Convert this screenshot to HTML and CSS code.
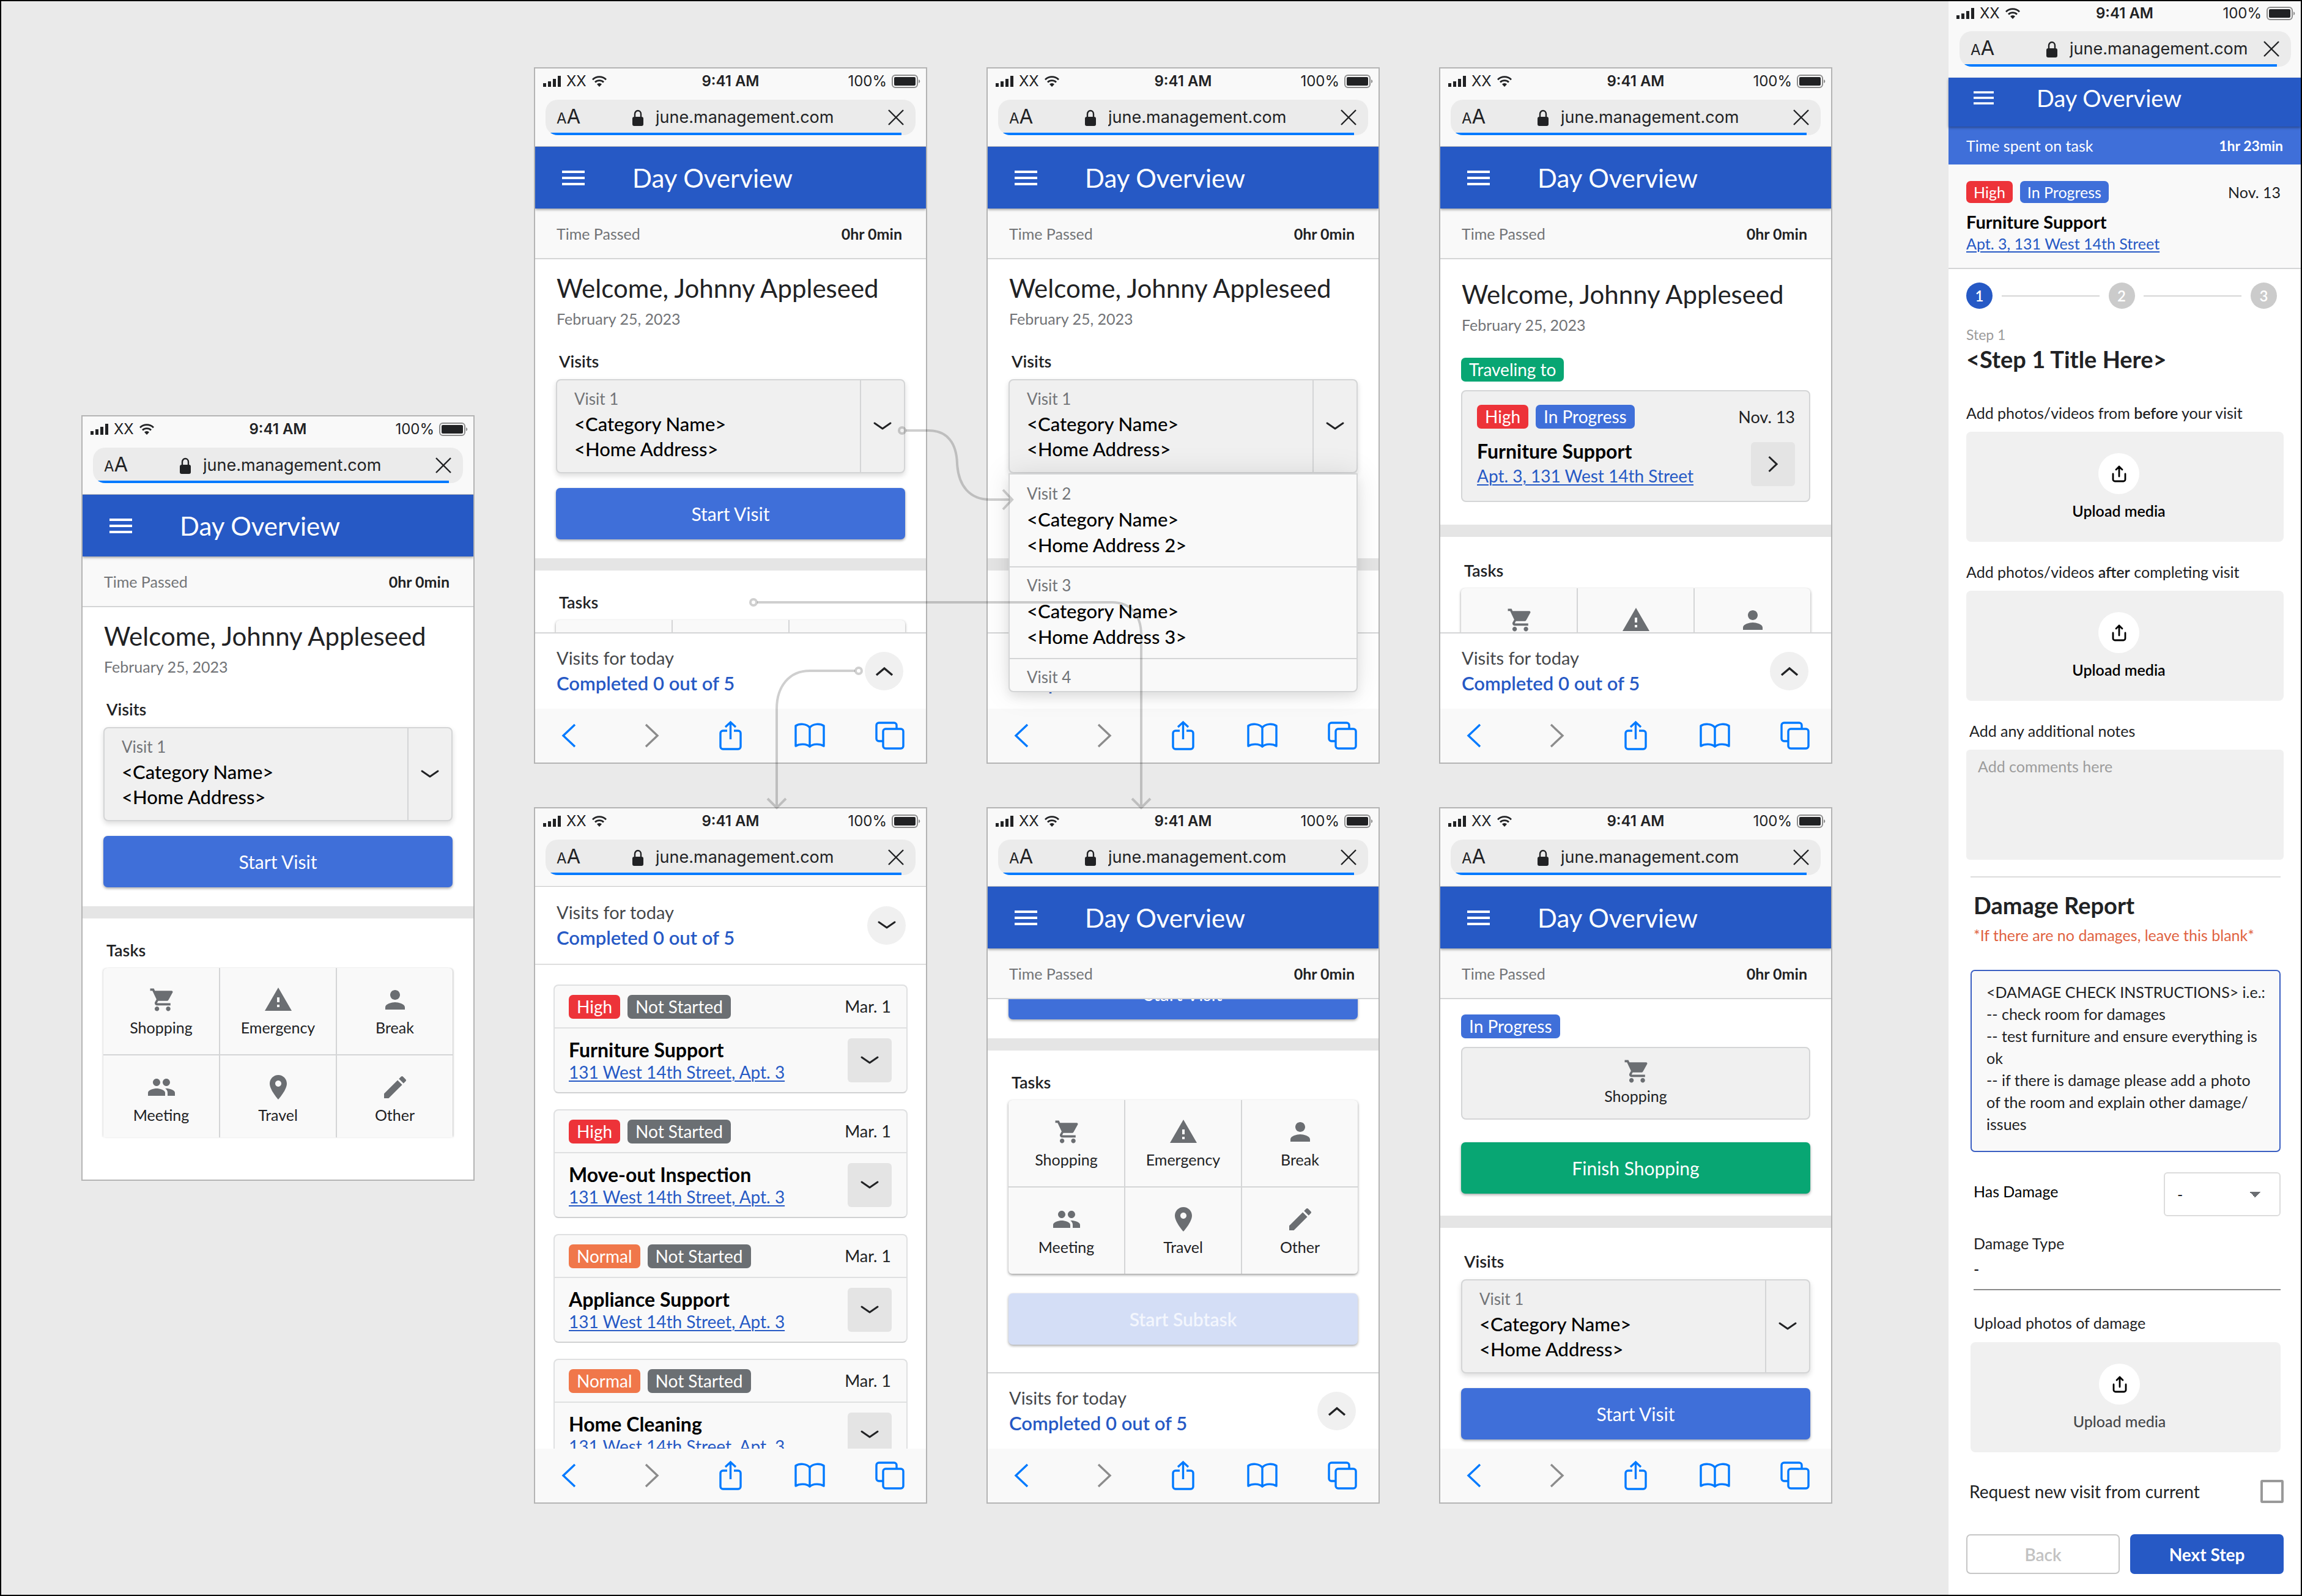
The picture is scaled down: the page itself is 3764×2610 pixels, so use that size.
FILE: index.html
```html
<!DOCTYPE html>
<html lang="en">
<head>
<meta charset="utf-8">
<meta name="viewport" content="width=device-width, initial-scale=1">
<title>June Management – Day Overview screens</title>
<link rel="stylesheet" href="styles.css">
</head>
<body>

<svg class="sprite" aria-hidden="true">
  <symbol id="i-signal" viewBox="0 0 29 18"><path d="M0 12h5v6H0zM8 9h5v9H8zM16 5h5v13h-5zM24 0h5v18h-5z"/></symbol>
  <symbol id="i-wifi" viewBox="0 0 24 18"><path d="M1 6.2A15.5 15.5 0 0 1 23 6.2M5 10.4A10 10 0 0 1 19 10.4" fill="none" stroke="currentColor" stroke-width="2.8"/><path d="M8 13.8A5.6 5.6 0 0 1 16 13.8L12 18z"/></symbol>
  <symbol id="i-battery" viewBox="0 0 47 22"><rect x="1" y="1" width="41" height="20" rx="5" fill="none" stroke="#8c8c8c" stroke-width="2"/><rect x="4" y="4" width="35" height="14" rx="2"/><path d="M44 8c3 1 3 5 0 6z" fill="#8c8c8c"/></symbol>
  <symbol id="i-lock" viewBox="0 0 18 27"><path d="M4 13V7.5a5 5.5 0 0 1 10 0V13" fill="none" stroke="currentColor" stroke-width="2.4"/><rect y="12" width="18" height="15" rx="3"/></symbol>
  <symbol id="i-close" viewBox="0 0 26 26"><path d="M1 1l24 24M25 1L1 25" fill="none" stroke="currentColor" stroke-width="2.4"/></symbol>
  <symbol id="i-menu" viewBox="0 0 37 24"><path d="M0 0h37v4H0zM0 10h37v4H0zM0 20h37v4H0z"/></symbol>
  <symbol id="i-down" viewBox="0 0 30 14"><path d="M2 2l13 9 13-9" fill="none" stroke="currentColor" stroke-width="3" stroke-linecap="round" stroke-linejoin="round"/></symbol>
  <symbol id="i-up" viewBox="0 0 30 16"><path d="M2 14L15 3l13 11" fill="none" stroke="currentColor" stroke-width="3.4"/></symbol>
  <symbol id="i-right" viewBox="0 0 16 28"><path d="M1.5 2L14 14 1.5 26" fill="none" stroke="currentColor" stroke-width="3"/></symbol>
  <symbol id="i-cart" viewBox="-2 -1 26 26"><path d="M7 18c-1.1 0-1.99.9-1.99 2S5.9 22 7 22s2-.9 2-2-.9-2-2-2zM1 2v2h2l3.6 7.59-1.35 2.45c-.16.28-.25.61-.25.96 0 1.1.9 2 2 2h12v-2H7.42c-.14 0-.25-.11-.25-.25l.03-.12.9-1.63h7.45c.75 0 1.41-.41 1.75-1.03l3.58-6.49A1 1 0 0 0 20 4H5.21l-.94-2H1zm16 16c-1.1 0-1.99.9-1.99 2s.89 2 1.99 2 2-.9 2-2-.9-2-2-2z"/></symbol>
  <symbol id="i-warning" viewBox="0 0 24 24"><path d="M1 21h22L12 2 1 21zm12-3h-2v-2h2v2zm0-4h-2v-4h2v4z"/></symbol>
  <symbol id="i-person" viewBox="0 0 24 24"><path d="M12 12c2.21 0 4-1.79 4-4s-1.79-4-4-4-4 1.79-4 4 1.79 4 4 4zm0 2c-2.67 0-8 1.34-8 4v2h16v-2c0-2.66-5.33-4-8-4z"/></symbol>
  <symbol id="i-group" viewBox="0 0 24 24"><path d="M16 11c1.66 0 2.99-1.34 2.99-3S17.66 5 16 5c-1.66 0-3 1.34-3 3s1.34 3 3 3zm-8 0c1.66 0 2.99-1.34 2.99-3S9.66 5 8 5C6.34 5 5 6.34 5 8s1.34 3 3 3zm0 2c-2.33 0-7 1.17-7 3.5V19h14v-2.5c0-2.33-4.67-3.5-7-3.5zm8 0c-.29 0-.62.02-.97.05 1.16.84 1.97 1.97 1.97 3.45V19h6v-2.5c0-2.33-4.67-3.5-7-3.5z"/></symbol>
  <symbol id="i-place" viewBox="0 0 24 24"><path d="M12 2C8.13 2 5 5.13 5 9c0 5.25 7 13 7 13s7-7.75 7-13c0-3.87-3.13-7-7-7zm0 9.5c-1.38 0-2.5-1.12-2.5-2.5s1.12-2.5 2.5-2.5 2.5 1.12 2.5 2.5-1.12 2.5-2.5 2.5z"/></symbol>
  <symbol id="i-edit" viewBox="0 0 24 24"><path d="M3 17.25V21h3.75L17.81 9.94l-3.75-3.75L3 17.25zM20.71 7.04c.39-.39.39-1.02 0-1.41l-2.34-2.34c-.39-.39-1.02-.39-1.41 0l-1.83 1.83 3.75 3.75 1.83-1.83z"/></symbol>
  <symbol id="i-upload" viewBox="0 0 24 28"><path d="M2 14v9a3 3 0 0 0 3 3h14a3 3 0 0 0 3-3v-9M12 18V2M7 7l5-5 5 5" fill="none" stroke="currentColor" stroke-width="2.8" stroke-linecap="round" stroke-linejoin="round"/></symbol>
  <symbol id="i-back" viewBox="0 0 50 50"><path d="M35 7L16 25l19 18" fill="none" stroke="currentColor" stroke-width="3.4"/></symbol>
  <symbol id="i-forward" viewBox="0 0 50 50"><path d="M20 7l19 18-19 18" fill="none" stroke="currentColor" stroke-width="3.4"/></symbol>
  <symbol id="i-share" viewBox="0 0 50 50"><path d="M21 17h-7a4 4 0 0 0-4 4v22a4 4 0 0 0 4 4h25a4 4 0 0 0 4-4V21a4 4 0 0 0-4-4h-7M26.500 31V3M18 11l8.500-8 8.500 8" fill="none" stroke="currentColor" stroke-width="3.4"/></symbol>
  <symbol id="i-book" viewBox="0 0 50 50"><path d="M25 12C20 5 8 5 2 9v33c6-4 18-4 23 1 5-5 17-5 23-1V9C42 5 30 5 25 12zV43" fill="none" stroke="currentColor" stroke-width="3.4" stroke-linejoin="round"/></symbol>
  <symbol id="i-tabs" viewBox="0 0 50 50"><path d="M14 34H7a4 4 0 0 1-4-4V8a4 4 0 0 1 4-4h25a4 4 0 0 1 4 4v5M18 14h25a4 4 0 0 1 4 4v24a4 4 0 0 1-4 4H18a4 4 0 0 1-4-4V18a4 4 0 0 1 4-4z" fill="none" stroke="currentColor" stroke-width="3.4"/></symbol>
</svg>

<template id="browser-chrome">
  <div class="status">
    <span class="status-left"><svg class="signal"><use href="#i-signal"/></svg><span>XX</span><svg class="wifi"><use href="#i-wifi"/></svg></span>
    <span class="status-time">9:41 AM</span>
    <span class="status-right">100%<svg class="battery"><use href="#i-battery"/></svg></span>
  </div>
  <div class="address">
    <button type="button" class="text-size" aria-label="Text size"><span class="small-a">A</span>A</button>
    <svg class="lock"><use href="#i-lock"/></svg>
    <input class="url" type="text" value="june.management.com" aria-label="Address" readonly>
    <button type="button" class="stop" aria-label="Stop loading"><svg><use href="#i-close"/></svg></button>
    <span class="progress"></span>
  </div>
</template>

<template id="app-bar">
  <button type="button" class="menu-button" aria-label="Menu"><svg><use href="#i-menu"/></svg></button>
  <h1 class="app-title">Day Overview</h1>
</template>

<template id="browser-toolbar">
  <button type="button" aria-label="Back"><svg><use href="#i-back"/></svg></button>
  <button type="button" class="is-off" aria-label="Forward"><svg><use href="#i-forward"/></svg></button>
  <button type="button" aria-label="Share"><svg><use href="#i-share"/></svg></button>
  <button type="button" aria-label="Bookmarks"><svg><use href="#i-book"/></svg></button>
  <button type="button" aria-label="Tabs"><svg><use href="#i-tabs"/></svg></button>
</template>

<template id="task-grid">
  <button type="button" class="task"><svg><use href="#i-cart"/></svg>Shopping</button>
  <button type="button" class="task"><svg><use href="#i-warning"/></svg>Emergency</button>
  <button type="button" class="task"><svg><use href="#i-person"/></svg>Break</button>
  <button type="button" class="task"><svg><use href="#i-group"/></svg>Meeting</button>
  <button type="button" class="task"><svg><use href="#i-place"/></svg>Travel</button>
  <button type="button" class="task"><svg><use href="#i-edit"/></svg>Other</button>
</template>

<template id="task-strip">
  <button type="button" class="task" aria-label="Shopping"><svg><use href="#i-cart"/></svg></button>
  <button type="button" class="task" aria-label="Emergency"><svg><use href="#i-warning"/></svg></button>
  <button type="button" class="task" aria-label="Break"><svg><use href="#i-person"/></svg></button>
</template>

<template id="visit-card">
  <div class="visit-text">
    <span class="visit-no">Visit 1</span>
    <span>&lt;Category Name&gt;</span>
    <span>&lt;Home Address&gt;</span>
  </div>
  <button type="button" class="visit-toggle" aria-label="Choose visit"><svg class="chevron"><use href="#i-down"/></svg></button>
</template>

<main class="board">

  <div class="intro">
    <article class="phone phone--tall">
      <header class="chrome" data-part="browser-chrome"></header>
      <div class="app-bar" data-part="app-bar"></div>
      <div class="time-row"><span>Time Passed</span><strong>0hr 0min</strong></div>
      <div class="screen">
        <section class="section section--first">
          <h2 class="welcome">Welcome, Johnny Appleseed</h2>
          <p class="date">February 25, 2023</p>
          <h3 class="label">Visits</h3>
          <div class="visit-card" data-part="visit-card"></div>
          <button type="button" class="action">Start Visit</button>
        </section>
        <section class="section section--next">
          <h3 class="label">Tasks</h3>
          <div class="task-grid task-grid--cut" data-part="task-grid"></div>
        </section>
      </div>
    </article>
  </div>

  <div class="flows">

    <article class="phone">
      <header class="chrome" data-part="browser-chrome"></header>
      <div class="app-bar" data-part="app-bar"></div>
      <div class="time-row"><span>Time Passed</span><strong>0hr 0min</strong></div>
      <div class="screen">
        <section class="section section--first">
          <h2 class="welcome">Welcome, Johnny Appleseed</h2>
          <p class="date">February 25, 2023</p>
          <h3 class="label">Visits</h3>
          <div class="visit-card" data-part="visit-card"></div>
          <button type="button" class="action">Start Visit</button>
        </section>
        <section class="section section--next">
          <h3 class="label">Tasks</h3>
          <div class="task-grid" data-part="task-strip"></div>
        </section>
      </div>
      <div class="sheet">
        <p class="sheet-text"><span>Visits for today</span><strong>Completed 0 out of 5</strong></p>
        <button type="button" class="round" aria-label="Show visits"><svg class="chevron-up"><use href="#i-up"/></svg></button>
      </div>
      <nav class="toolbar" data-part="browser-toolbar" aria-label="Browser"></nav>
    </article>

    <article class="phone phone--menu">
      <header class="chrome" data-part="browser-chrome"></header>
      <div class="app-bar" data-part="app-bar"></div>
      <div class="time-row"><span>Time Passed</span><strong>0hr 0min</strong></div>
      <div class="screen">
        <section class="section section--first">
          <h2 class="welcome">Welcome, Johnny Appleseed</h2>
          <p class="date">February 25, 2023</p>
          <h3 class="label">Visits</h3>
          <div class="visit-card" data-part="visit-card"></div>
        </section>
        <section class="section section--next"></section>
      </div>
      <div class="sheet">
        <p class="sheet-text"><strong>Completed 0 out of 5</strong></p>
      </div>
      <nav class="toolbar" data-part="browser-toolbar" aria-label="Browser"></nav>
      <ul class="visit-menu">
        <li class="visit-text"><span class="visit-no">Visit 2</span><span>&lt;Category Name&gt;</span><span>&lt;Home Address 2&gt;</span></li>
        <li class="visit-text"><span class="visit-no">Visit 3</span><span>&lt;Category Name&gt;</span><span>&lt;Home Address 3&gt;</span></li>
        <li class="visit-text"><span class="visit-no">Visit 4</span></li>
      </ul>
    </article>

    <article class="phone">
      <header class="chrome" data-part="browser-chrome"></header>
      <div class="app-bar" data-part="app-bar"></div>
      <div class="time-row"><span>Time Passed</span><strong>0hr 0min</strong></div>
      <div class="screen">
        <section class="section section--travel">
          <h2 class="welcome">Welcome, Johnny Appleseed</h2>
          <p class="date">February 25, 2023</p>
          <div class="tags"><span class="tag tag--green">Traveling to</span></div>
          <div class="current">
            <div class="current-head">
              <div class="tags"><span class="tag tag--red">High</span><span class="tag tag--blue">In Progress</span></div>
              <span class="when">Nov. 13</span>
            </div>
            <div class="current-body">
              <div>
                <h3 class="job">Furniture Support</h3>
                <a class="place" href="#address">Apt. 3, 131 West 14th Street</a>
              </div>
              <button type="button" class="square" aria-label="Open visit"><svg class="chevron-right"><use href="#i-right"/></svg></button>
            </div>
          </div>
        </section>
        <section class="section section--next section--roomy">
          <h3 class="label">Tasks</h3>
          <div class="task-grid" data-part="task-strip"></div>
        </section>
      </div>
      <div class="sheet">
        <p class="sheet-text"><span>Visits for today</span><strong>Completed 0 out of 5</strong></p>
        <button type="button" class="round" aria-label="Show visits"><svg class="chevron-up"><use href="#i-up"/></svg></button>
      </div>
      <nav class="toolbar" data-part="browser-toolbar" aria-label="Browser"></nav>
    </article>

    <article class="phone">
      <header class="chrome" data-part="browser-chrome"></header>
      <div class="sheet sheet--open">
        <p class="sheet-text"><span>Visits for today</span><strong>Completed 0 out of 5</strong></p>
        <button type="button" class="round" aria-label="Hide visits"><svg class="chevron"><use href="#i-down"/></svg></button>
      </div>
      <div class="screen">
        <ul class="jobs">
          <li class="job-card">
            <div class="job-head"><div class="tags"><span class="tag tag--red">High</span><span class="tag tag--gray">Not Started</span></div><span class="when">Mar. 1</span></div>
            <div class="job-body"><div><h3 class="job">Furniture Support</h3><a class="place" href="#address">131 West 14th Street, Apt. 3</a></div><button type="button" class="square" aria-label="Expand"><svg class="chevron"><use href="#i-down"/></svg></button></div>
          </li>
          <li class="job-card">
            <div class="job-head"><div class="tags"><span class="tag tag--red">High</span><span class="tag tag--gray">Not Started</span></div><span class="when">Mar. 1</span></div>
            <div class="job-body"><div><h3 class="job">Move-out Inspection</h3><a class="place" href="#address">131 West 14th Street, Apt. 3</a></div><button type="button" class="square" aria-label="Expand"><svg class="chevron"><use href="#i-down"/></svg></button></div>
          </li>
          <li class="job-card">
            <div class="job-head"><div class="tags"><span class="tag tag--orange">Normal</span><span class="tag tag--gray">Not Started</span></div><span class="when">Mar. 1</span></div>
            <div class="job-body"><div><h3 class="job">Appliance Support</h3><a class="place" href="#address">131 West 14th Street, Apt. 3</a></div><button type="button" class="square" aria-label="Expand"><svg class="chevron"><use href="#i-down"/></svg></button></div>
          </li>
          <li class="job-card">
            <div class="job-head"><div class="tags"><span class="tag tag--orange">Normal</span><span class="tag tag--gray">Not Started</span></div><span class="when">Mar. 1</span></div>
            <div class="job-body"><div><h3 class="job">Home Cleaning</h3><a class="place" href="#address">131 West 14th Street, Apt. 3</a></div><button type="button" class="square" aria-label="Expand"><svg class="chevron"><use href="#i-down"/></svg></button></div>
          </li>
        </ul>
      </div>
      <nav class="toolbar" data-part="browser-toolbar" aria-label="Browser"></nav>
    </article>

    <article class="phone">
      <header class="chrome" data-part="browser-chrome"></header>
      <div class="app-bar" data-part="app-bar"></div>
      <div class="time-row"><span>Time Passed</span><strong>0hr 0min</strong></div>
      <div class="screen screen--scrolled">
        <section class="section section--tail">
          <button type="button" class="action">Start Visit</button>
        </section>
        <section class="section section--next section--subtask">
          <h3 class="label">Tasks</h3>
          <div class="task-grid" data-part="task-grid"></div>
          <button type="button" class="action action--off" disabled>Start Subtask</button>
        </section>
      </div>
      <div class="sheet">
        <p class="sheet-text"><span>Visits for today</span><strong>Completed 0 out of 5</strong></p>
        <button type="button" class="round" aria-label="Show visits"><svg class="chevron-up"><use href="#i-up"/></svg></button>
      </div>
      <nav class="toolbar" data-part="browser-toolbar" aria-label="Browser"></nav>
    </article>

    <article class="phone">
      <header class="chrome" data-part="browser-chrome"></header>
      <div class="app-bar" data-part="app-bar"></div>
      <div class="time-row"><span>Time Passed</span><strong>0hr 0min</strong></div>
      <div class="screen">
        <section class="section section--running">
          <div class="tags"><span class="tag tag--blue">In Progress</span></div>
          <div class="current running"><svg><use href="#i-cart"/></svg>Shopping</div>
          <button type="button" class="action action--green">Finish Shopping</button>
        </section>
        <section class="section section--next section--roomy">
          <h3 class="label">Visits</h3>
          <div class="visit-card" data-part="visit-card"></div>
          <button type="button" class="action">Start Visit</button>
        </section>
      </div>
      <nav class="toolbar" data-part="browser-toolbar" aria-label="Browser"></nav>
    </article>

  </div>

  <article class="panel">
    <header class="chrome" data-part="browser-chrome"></header>
    <div class="app-bar" data-part="app-bar"></div>
    <div class="time-row time-row--blue"><span>Time spent on task</span><strong>1hr 23min</strong></div>
    <div class="summary">
      <div class="summary-head">
        <div class="tags"><span class="tag tag--red">High</span><span class="tag tag--blue">In Progress</span></div>
        <span class="when">Nov. 13</span>
      </div>
      <h2 class="job">Furniture Support</h2>
      <a class="place" href="#address">Apt. 3, 131 West 14th Street</a>
    </div>
    <form class="form">
      <ol class="steps">
        <li class="step step--on">1</li>
        <li class="step">2</li>
        <li class="step">3</li>
      </ol>
      <p class="step-no">Step 1</p>
      <h2 class="step-title">&lt;Step 1 Title Here&gt;</h2>

      <div class="field field--first">
        <p class="field-label">Add photos/videos from <strong>before</strong> your visit</p>
        <button type="button" class="upload"><span class="upload-icon"><svg><use href="#i-upload"/></svg></span>Upload media</button>
      </div>
      <div class="field">
        <p class="field-label">Add photos/videos <strong>after</strong> completing visit</p>
        <button type="button" class="upload"><span class="upload-icon"><svg><use href="#i-upload"/></svg></span>Upload media</button>
      </div>
      <div class="field">
        <label class="field-label notes-label" for="notes">Add any additional notes</label>
        <textarea class="notes" id="notes" placeholder="Add comments here"></textarea>
      </div>

      <section class="damage">
        <h2 class="damage-title">Damage Report</h2>
        <p class="damage-note">*If there are no damages, leave this blank*</p>
        <div class="instructions">
          <p class="instructions-head">&lt;DAMAGE CHECK INSTRUCTIONS&gt; i.e.:</p>
          <p>-- check room for damages</p>
          <p>-- test furniture and ensure everything is ok</p>
          <p>-- if there is damage please add a photo of the room and explain other damage/<wbr>issues</p>
        </div>
        <div class="has-damage">
          <label for="has-damage">Has Damage</label>
          <select id="has-damage"><option>-</option><option>Yes</option><option>No</option></select>
        </div>
        <label class="field-label inset" for="damage-type">Damage Type</label>
        <input class="damage-type" id="damage-type" type="text" value="-">
        <p class="field-label inset photos-label">Upload photos of damage</p>
        <button type="button" class="upload upload--soft"><span class="upload-icon"><svg><use href="#i-upload"/></svg></span>Upload media</button>
      </section>

      <div class="request">
        <label for="request">Request new visit from current</label>
        <input type="checkbox" id="request">
      </div>
      <div class="form-actions">
        <button type="button" class="back">Back</button>
        <button type="button" class="next">Next Step</button>
      </div>
    </form>
  </article>

  <svg class="links" aria-hidden="true">
    <g fill="none" stroke="#000" stroke-opacity=".19" stroke-width="4">
      <circle cx="1473" cy="702" r="5"/>
      <path d="M1479 702h37c32 0 46 22 47 54 2 36 20 59 54 59h35M1638 799l15 16-15 16"/>
      <circle cx="1230" cy="983" r="5"/>
      <path d="M1236 983h580c32 0 48 22 48 54v281M1849 1304l15 15 15-15"/>
      <circle cx="1402" cy="1095" r="5"/>
      <path d="M1396 1095h-74c-34 0-54 26-54 62v161M1253 1304l15 15 15-15"/>
    </g>
  </svg>
</main>

<script src="parts.js"></script>
</body>
</html>
```
FILE: parts.js
```js
// Fill each placeholder with a copy of the shared part that it names.
document.querySelectorAll('[data-part]').forEach(function (slot) {
  slot.appendChild(document.getElementById(slot.dataset.part).content.cloneNode(true));
});
```
FILE: styles.css
```css
:root {
  --blue: #2659c5;
  --blue-light: #3f6fd9;
  --ink: #212224;
  --muted: #727477;
  --line: #d4d5d6;
  --soft: #f9f9f9;
  --fill: #f0f0f0;
  --text: Lato, "Open Sans", sans-serif;
  --system: Inter, "Liberation Sans", sans-serif;
}

*, *::before, *::after { box-sizing: border-box; }

body, h1, h2, h3, p, ul, ol { margin: 0; padding: 0; }
ul, ol { list-style: none; }

body {
  font-family: var(--text);
  font-size: 25px;
  line-height: 30px;
  color: var(--ink);
  background: #eaeaea;
}

button, input, select, textarea {
  font: inherit;
  color: inherit;
  margin: 0;
  padding: 0;
  border: 0;
  border-radius: 0;
  background: none;
}

svg { display: block; fill: currentColor; }
.sprite { position: absolute; width: 0; height: 0; }

/* Board */
.board {
  position: relative;
  display: flex;
  min-height: 100vh;
  padding-left: 131px;
  border: 2px solid #000;
}
.intro { flex: 643 1 0; min-width: 0; align-self: center; margin-right: 97px; }
.flows {
  flex: 2123 1 0;
  min-width: 0;
  display: grid;
  grid-template-columns: repeat(3, minmax(0, 1fr));
  align-content: start;
  gap: 71px 97px;
  padding-top: 108px;
  margin-right: 190px;
}
.links { position: absolute; inset: 0; width: 100%; height: 100%; pointer-events: none; }

/* Phone */
.phone {
  position: relative;
  display: flex;
  flex-direction: column;
  height: 1139px;
  border: 2px solid #b4b4b4;
  background: #fff;
  overflow: hidden;
}
.phone--tall { height: 1252px; }

.chrome { flex: none; padding-bottom: 18px; background: var(--soft); border-bottom: 1px solid #c4c4c4; font-family: var(--system); }
.status {
  display: grid;
  grid-template-columns: 1fr auto 1fr;
  align-items: center;
  height: 42px;
  padding: 0 9px 0 13px;
  margin-bottom: 9px;
  font-size: 24px;
}
.status-left, .status-right { display: flex; align-items: center; gap: 9px; }
.status-right { justify-content: flex-end; gap: 8px; }
.status-time { padding-right: 4px; font-weight: 600; }
.signal { width: 29px; height: 18px; }
.wifi { width: 24px; height: 18px; }
.battery { width: 47px; height: 22px; }

.address {
  position: relative;
  display: flex;
  align-items: center;
  height: 58px;
  margin: 0 17px;
  padding: 0 19px 0 18px;
  border-radius: 20px;
  background: #ebebeb;
  overflow: hidden;
}
.text-size { display: flex; align-items: baseline; width: 42px; font-size: 33px; line-height: 40px; }
.small-a { font-size: 24px; }
.lock { width: 18px; height: 27px; margin: 0 20px 0 82px; }
.url { flex: 1; min-width: 0; font-size: 27px; line-height: 36px; }
.stop svg { width: 26px; height: 26px; }
.progress { position: absolute; left: 0; right: 23px; bottom: 0; height: 4px; background: #007aff; }

.app-bar {
  position: relative;
  z-index: 1;
  flex: none;
  display: flex;
  align-items: center;
  gap: 78px;
  height: 101px;
  padding-left: 44px;
  background: var(--blue);
  color: #fff;
  box-shadow: 0 2px 4px rgba(0, 0, 0, .35);
}
.menu-button svg { width: 37px; height: 24px; }
.app-title { font-size: 42px; line-height: 50px; font-weight: 400; }

.time-row {
  flex: none;
  display: flex;
  align-items: center;
  justify-content: space-between;
  height: 83px;
  padding: 0 39px 0 35px;
  border-bottom: 2px solid var(--line);
  background: var(--soft);
  color: var(--muted);
}
.time-row strong { color: var(--ink); }

.screen { flex: 1; min-height: 0; overflow: hidden; }
.screen--scrolled { display: flex; flex-direction: column; justify-content: flex-end; }

/* Sections of a screen */
.section { padding: 0 34px; }
.section--first { padding-top: 22px; padding-bottom: 31px; }
.section--travel { padding-top: 32px; padding-bottom: 37px; }
.section--running { padding-top: 25px; padding-bottom: 36px; }
.section--tail { padding-bottom: 31px; }
.section--next { padding-top: 36px; border-top: 20px solid #e5e5e5; }
.section--roomy { padding-top: 39px; }
.section--subtask { padding-bottom: 45px; }

.welcome { padding-left: 1px; font-size: 42px; line-height: 50px; font-weight: 400; white-space: nowrap; }
.date { margin-top: 9px; padding-left: 1px; line-height: 32px; color: var(--muted); }
.label { padding-left: 5px; margin-bottom: 13px; font-size: 27px; line-height: 32px; font-weight: 600; }
.date + .label { margin-top: 38px; }
.date + .tags { margin-top: 38px; }

.visit-card {
  display: flex;
  height: 154px;
  margin-bottom: 24px;
  border: 2px solid var(--line);
  border-radius: 8px;
  background: var(--fill);
  box-shadow: 0 4px 8px rgba(0, 0, 0, .14);
}
.visit-text {
  flex: 1;
  display: flex;
  flex-direction: column;
  padding: 10px 28px;
  font-size: 31px;
  line-height: 41px;
  font-weight: 500;
  color: #000;
}
.visit-no { font-size: 26px; font-weight: 400; color: var(--muted); }
.visit-toggle { display: grid; place-items: center; width: 72px; border-left: 2px solid var(--line); color: var(--ink); }
.chevron { width: 30px; height: 14px; }
.chevron-up { width: 30px; height: 16px; }
.chevron-right { width: 16px; height: 28px; }

.visit-menu {
  position: absolute;
  top: 662px;
  left: 34px;
  right: 34px;
  height: 358px;
  overflow: hidden;
  border: 2px solid var(--line);
  border-radius: 0 0 8px 8px;
  background: var(--soft);
  box-shadow: 0 0 48px rgba(0, 0, 0, .1), 0 8px 16px rgba(0, 0, 0, .08);
}
.visit-menu .visit-text { height: 150px; line-height: 42px; }
.visit-menu .visit-text + .visit-text { padding-top: 8px; border-top: 2px solid var(--line); }
.phone--menu .section--first { padding-bottom: 115px; }
.phone--menu .sheet { align-items: flex-end; padding-bottom: 22px; }

.action {
  display: block;
  width: 100%;
  height: 84px;
  border-radius: 7px;
  background: var(--blue-light);
  color: #fff;
  font-size: 30px;
  line-height: 36px;
  box-shadow: 0 2px 4px rgba(0, 0, 0, .35);
}
.action--green { background: #08a673; }
.action--off { margin-top: 32px; background: #d4def6; color: #f3f6fd; font-weight: 600; }

.task-grid {
  display: grid;
  grid-template-columns: repeat(3, minmax(0, 1fr));
  gap: 2px;
  border-radius: 6px;
  background: var(--line);
  box-shadow: 0 2px 4px rgba(0, 0, 0, .4);
  overflow: hidden;
}
.task-grid--cut { height: 277px; border-radius: 6px 6px 0 0; box-shadow: 2px 0 3px -1px rgba(0, 0, 0, .25), -2px 0 3px -1px rgba(0, 0, 0, .15); }
.task {
  display: flex;
  flex-direction: column;
  align-items: center;
  gap: 5px;
  height: 141px;
  padding-top: 28px;
  background: var(--soft);
  font-size: 25px;
  line-height: 32px;
}
.task svg, .running svg { width: 48px; height: 48px; color: #6b6e72; }

/* Tags and current work */
.tags { display: flex; gap: 12px; }
.tag { padding: 0 13px; border-radius: 7px; color: #fff; font-size: 28px; line-height: 39px; white-space: nowrap; }
.tag--red { background: #ed3339; }
.tag--blue { background: var(--blue-light); }
.tag--green { background: #08a673; }
.tag--gray { background: #6b6f73; }
.tag--orange { background: #f0774a; }
.when { font-size: 27px; line-height: 32px; }
.job { font-size: 32px; line-height: 38px; font-weight: 700; color: #000; white-space: nowrap; }
.place { display: block; font-size: 28px; line-height: 34px; color: var(--blue); text-decoration: underline; text-decoration-thickness: 2px; text-underline-offset: 3px; white-space: nowrap; }

.current { margin-top: 14px; border: 2px solid var(--line); border-radius: 8px; background: var(--fill); }
.section--travel .current { height: 183px; padding: 22px 23px 0 24px; }
.current-head, .current-body, .job-head, .job-body { display: flex; align-items: center; justify-content: space-between; }
.current-body { align-items: flex-end; margin-top: 14px; }
.current-body .job { margin-bottom: 4px; }
.square { flex: none; display: grid; place-items: center; width: 72px; height: 72px; border-radius: 6px; background: #e4e4e4; }
.current-body .square { margin-top: 8px; }
.running { display: flex; flex-direction: column; align-items: center; height: 119px; margin-bottom: 37px; padding-top: 14px; line-height: 32px; }

.sheet {
  flex: none;
  display: flex;
  align-items: center;
  justify-content: space-between;
  height: 125px;
  padding: 0 37px 0 35px;
  border-top: 2px solid var(--line);
  background: #fff;
}
.sheet--open { height: 128px; padding-right: 33px; border-top: 0; border-bottom: 2px solid #dedede; }
.sheet-text { display: flex; flex-direction: column; gap: 3px; font-size: 29px; line-height: 36px; color: #45474a; }
.sheet-text strong { font-size: 31px; line-height: 40px; font-weight: 600; color: var(--blue); }
.round { display: grid; place-items: center; width: 63px; height: 63px; border-radius: 50%; background: var(--fill); color: var(--ink); }

.toolbar {
  flex: none;
  display: flex;
  align-items: center;
  justify-content: space-between;
  height: 88px;
  padding: 0 34px 0 30px;
  background: var(--soft);
  color: #007aff;
}
.toolbar svg { width: 50px; height: 50px; }
.toolbar .is-off { color: #8c8c8c; }

.jobs { display: flex; flex-direction: column; gap: 26px; padding: 32px 30px 0; }
.job-card { height: 178px; border: 2px solid #dfe0e1; border-bottom-color: #d0d1d2; border-radius: 8px; background: var(--soft); }
.job-head { height: 70px; padding: 0 25px 0 23px; border-bottom: 2px solid #dfe0e1; }
.job-body { height: 104px; padding: 0 24px 0 23px; }

/* Task detail panel */
.panel { flex: none; width: 576px; background: #fff; }
.panel .chrome { border-bottom: 0; }
.panel .status { height: 40px; }
.panel .address { margin: 0 16px 0 18px; }
.panel .app-bar { gap: 70px; height: 80px; padding: 0 0 14px 41px; }
.panel .menu-button svg { width: 33px; height: 22px; }
.panel .app-title { font-size: 38px; line-height: 46px; }
.time-row--blue { height: 62px; padding: 0 29px; border: 0; background: var(--blue-light); color: #fff; }
.time-row--blue strong { font-size: 23px; color: #fff; }
.summary { padding: 27px 33px 25px 29px; border-bottom: 2px solid var(--line); background: var(--soft); }
.summary-head { display: flex; align-items: center; justify-content: space-between; margin-bottom: 14px; }
.panel .tag { padding: 0 12px; font-size: 25px; line-height: 36px; }
.panel .when { font-size: 25px; }
.panel .job { font-size: 29px; line-height: 34px; margin-bottom: 3px; }
.panel .place { font-size: 25px; line-height: 30px; }

.form { padding: 22px 28px 34px 29px; }
.steps { display: flex; align-items: center; padding-right: 11px; }
.step { flex: none; display: flex; align-items: center; color: #fff; font-size: 24px; line-height: 43px; font-weight: 600; justify-content: center; width: 43px; height: 43px; border-radius: 50%; background: #cbcbcb; }
.step--on { background: var(--blue); }
.step + .step { position: relative; margin-left: auto; }
.step + .step::before { content: ""; position: absolute; right: 58px; width: 160px; height: 2px; background: #d6d6d6; }
.step-no { margin-top: 28px; font-size: 23px; line-height: 28px; color: #9a9a9a; }
.step-title { margin-top: 4px; font-size: 38px; line-height: 44px; font-weight: 700; }

.field { margin-top: 34px; }
.field--first { margin-top: 51px; }
.field-label { display: block; margin-bottom: 16px; white-space: nowrap; }
.field-label strong { font-weight: 600; }
.notes-label { padding-left: 5px; }
.upload {
  display: flex;
  flex-direction: column;
  align-items: center;
  width: 100%;
  height: 180px;
  padding: 35px 20px 0 0;
  border-radius: 8px;
  background: var(--fill);
  color: #000;
  font-weight: 600;
}
.upload-icon { display: grid; place-items: center; width: 67px; height: 67px; margin-bottom: 12px; border-radius: 50%; background: #fff; color: #000; }
.upload-icon svg { width: 24px; height: 28px; }
.upload--soft { color: #45474a; font-weight: 500; }
.notes { display: block; width: 100%; height: 180px; padding: 12px 19px; border-radius: 6px; background: var(--fill); resize: none; }
.notes::placeholder { color: #9c9c9c; opacity: 1; }

.damage { margin: 27px 5px 0 7px; padding-top: 22px; border-top: 2px solid #dcdcdc; }
.damage-title { padding-left: 5px; font-size: 38px; line-height: 46px; }
.damage-note { margin-top: 11px; padding-left: 5px; color: #e0623f; white-space: nowrap; }
.instructions { margin-top: 42px; padding: 16px 24px 26px; border: 2px solid #3b5fc2; border-radius: 7px; background: var(--soft); line-height: 36px; }
.instructions-head { white-space: nowrap; }
.has-damage { display: flex; justify-content: space-between; align-items: center; margin: 33px 0 29px; padding-left: 5px; }
.has-damage label { padding-bottom: 10px; color: #000; }
.has-damage select {
  width: 191px;
  height: 72px;
  padding-left: 20px;
  border: 2px solid #dcdcdc;
  border-radius: 6px;
  appearance: none;
  background: linear-gradient(to bottom right, #6b6e72 50%, transparent 50%) 147px 30px / 9px 9px no-repeat, linear-gradient(to bottom left, #6b6e72 50%, transparent 50%) 138px 30px / 9px 9px no-repeat, #fff;
}
.inset { padding-left: 5px; margin-bottom: 0; }
.damage-type { display: block; width: calc(100% - 5px); height: 62px; margin: 0 0 38px 5px; padding-bottom: 6px; border-bottom: 2px solid #8a8a8a; color: #000; }
.photos-label { margin-bottom: 17px; }

.request { display: flex; align-items: center; justify-content: space-between; margin: 45px 0 51px; padding-left: 5px; font-size: 28px; line-height: 36px; }
.request input { appearance: none; width: 38px; height: 38px; border: 4px solid #999; border-radius: 3px; background: #fff; }
.form-actions { display: grid; grid-template-columns: 1fr 1fr; gap: 17px; }
.back, .next { height: 65px; border-radius: 7px; font-size: 28px; line-height: 34px; font-weight: 600; }
.back { border: 2px solid #c6c6c6; color: #c2c2c2; }
.next { background: var(--blue); color: #fff; font-weight: 700; }
```
